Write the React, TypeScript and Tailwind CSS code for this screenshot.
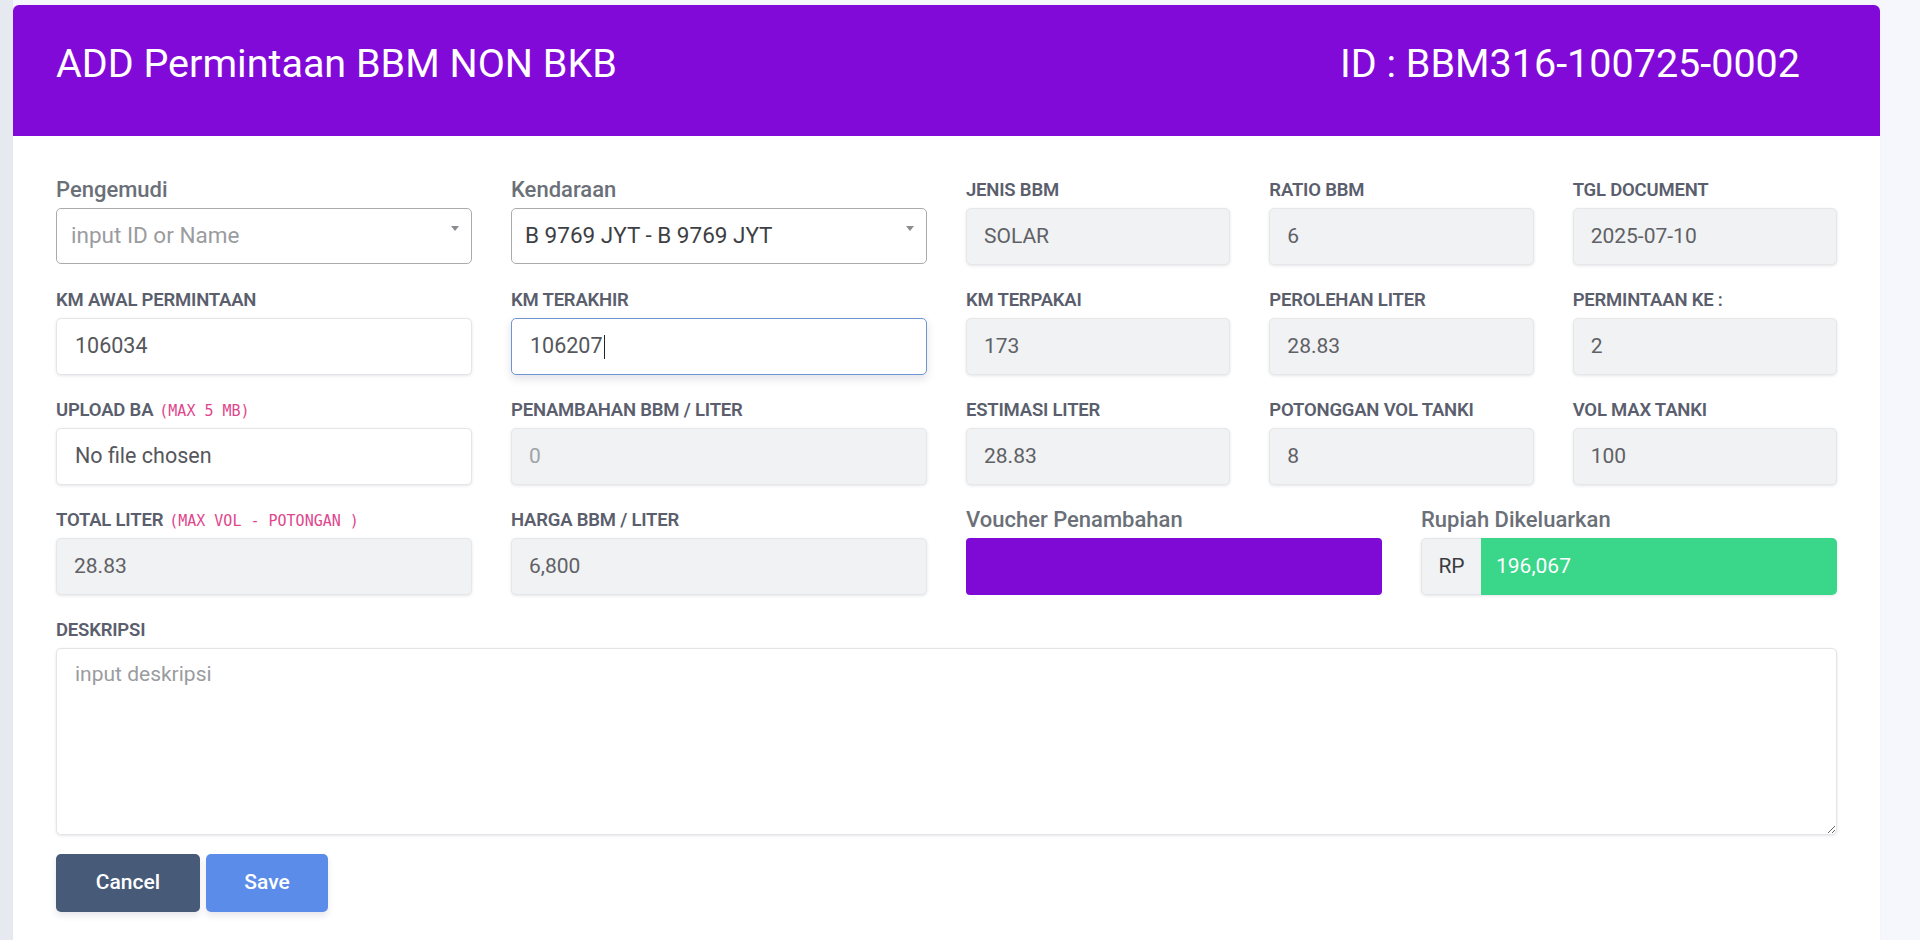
import React from "react";

const font = { fontFamily: "Roboto, 'Liberation Sans', sans-serif" };

function UpperLabel({ children }: { children: React.ReactNode }) {
  return (
    <div className="h-[24px] leading-[24px] mb-[6px] text-[18.5px] font-semibold uppercase text-[#5a5e6d] tracking-[-0.2px] whitespace-nowrap">
      {children}
    </div>
  );
}

function BigLabel({ children }: { children: React.ReactNode }) {
  return (
    <div className="h-[24px] leading-[24px] mb-[6px] text-[22px] font-medium text-[#6b7078] whitespace-nowrap">
      {children}
    </div>
  );
}

function Code({ children }: { children: React.ReactNode }) {
  return (
    <span
      className="text-[15px] font-normal normal-case text-[#e0468c] ml-[6px] tracking-normal"
      style={{ fontFamily: "'DejaVu Sans Mono', 'Liberation Mono', monospace" }}
    >
      {children}
    </span>
  );
}

function Disabled({ value, muted }: { value: string; muted?: boolean }) {
  return (
    <div
      className={`h-[57px] rounded-[5px] bg-[#f1f2f3] border border-[#e6e7e9] shadow-[0_1px_3px_rgba(50,50,93,0.12)] flex items-center px-[17px] text-[21px] ${
        muted ? "text-[#a0a3a8]" : "text-[#5f6166]"
      }`}
    >
      {value}
    </div>
  );
}

function White({ value }: { value: string }) {
  return (
    <div className="h-[57px] rounded-[5px] bg-white border border-[#e3e5e8] shadow-[0_1px_3px_rgba(50,50,93,0.12)] flex items-center px-[18px] text-[21.5px] text-[#55575c]">
      {value}
    </div>
  );
}

function Select({ value, placeholder }: { value?: string; placeholder?: string }) {
  return (
    <div className="relative h-[56px] rounded-[5px] bg-white border border-[#a9abae] flex items-center pl-[13px] text-[22.5px]">
      {value ? (
        <span className="text-[#3d3f44]">{value}</span>
      ) : (
        <span className="text-[#9a9ca0] pl-[1px]">{placeholder}</span>
      )}
      <span className="absolute right-[12px] top-[17px] w-0 h-0 border-l-[4px] border-r-[4px] border-t-[5px] border-l-transparent border-r-transparent border-t-[#8a8c90]" />
    </div>
  );
}

export default function App() {
  return (
    <div className="w-[1920px] h-[940px] overflow-hidden flex bg-[#f5f7fd]" style={font}>
      <div className="w-[13px] h-full bg-[#e6e9f0] shrink-0" />
      <div className="pt-[5px] shrink-0">
        <div className="w-[1867px] h-[935px] bg-white rounded-t-[6px] shadow-[0_0_2px_rgba(0,0,0,0.05)]">
          <div className="h-[131px] bg-[#810ad8] rounded-t-[6px] flex items-start justify-between pl-[43px] pr-[80px] pt-[35px] text-white text-[39.5px] leading-[47px]">
            <div>ADD Permintaan BBM NON BKB</div>
            <div>ID : BBM316-100725-0002</div>
          </div>

          <div className="px-[43px] pt-[42px]">
            <div className="grid grid-cols-12 gap-x-[39px] gap-y-[23px]">
              {/* Row 1 */}
              <div className="col-span-3">
                <BigLabel>Pengemudi</BigLabel>
                <Select placeholder="input ID or Name" />
              </div>
              <div className="col-span-3">
                <BigLabel>Kendaraan</BigLabel>
                <Select value="B 9769 JYT - B 9769 JYT" />
              </div>
              <div className="col-span-2">
                <UpperLabel>JENIS BBM</UpperLabel>
                <Disabled value="SOLAR" />
              </div>
              <div className="col-span-2">
                <UpperLabel>RATIO BBM</UpperLabel>
                <Disabled value="6" />
              </div>
              <div className="col-span-2">
                <UpperLabel>TGL DOCUMENT</UpperLabel>
                <Disabled value="2025-07-10" />
              </div>

              {/* Row 2 */}
              <div className="col-span-3">
                <UpperLabel>KM AWAL PERMINTAAN</UpperLabel>
                <White value="106034" />
              </div>
              <div className="col-span-3">
                <UpperLabel>KM TERAKHIR</UpperLabel>
                <div className="h-[57px] rounded-[5px] bg-white border border-[#6f94d2] shadow-[0_4px_8px_rgba(50,50,93,0.14)] flex items-center px-[18px] text-[21.5px] text-[#55575c]">
                  <span>106207</span>
                  <span className="inline-block w-[1px] h-[24px] bg-[#222] ml-[1px]" />
                </div>
              </div>
              <div className="col-span-2">
                <UpperLabel>KM TERPAKAI</UpperLabel>
                <Disabled value="173" />
              </div>
              <div className="col-span-2">
                <UpperLabel>PEROLEHAN LITER</UpperLabel>
                <Disabled value="28.83" />
              </div>
              <div className="col-span-2">
                <UpperLabel>PERMINTAAN KE :</UpperLabel>
                <Disabled value="2" />
              </div>

              {/* Row 3 */}
              <div className="col-span-3">
                <UpperLabel>
                  UPLOAD BA<Code>(MAX 5 MB)</Code>
                </UpperLabel>
                <White value="No file chosen" />
              </div>
              <div className="col-span-3">
                <UpperLabel>PENAMBAHAN BBM / LITER</UpperLabel>
                <Disabled value="0" muted />
              </div>
              <div className="col-span-2">
                <UpperLabel>ESTIMASI LITER</UpperLabel>
                <Disabled value="28.83" />
              </div>
              <div className="col-span-2">
                <UpperLabel>POTONGGAN VOL TANKI</UpperLabel>
                <Disabled value="8" />
              </div>
              <div className="col-span-2">
                <UpperLabel>VOL MAX TANKI</UpperLabel>
                <Disabled value="100" />
              </div>

              {/* Row 4 */}
              <div className="col-span-3">
                <UpperLabel>
                  TOTAL LITER<Code>(MAX VOL - POTONGAN )</Code>
                </UpperLabel>
                <Disabled value="28.83" />
              </div>
              <div className="col-span-3">
                <UpperLabel>HARGA BBM / LITER</UpperLabel>
                <Disabled value="6,800" />
              </div>
              <div className="col-span-3">
                <BigLabel>Voucher Penambahan</BigLabel>
                <div className="h-[57px] rounded-[4px] bg-[#7f0ad6]" />
              </div>
              <div className="col-span-3">
                <BigLabel>Rupiah Dikeluarkan</BigLabel>
                <div className="h-[57px] flex rounded-[5px] shadow-[0_1px_3px_rgba(50,50,93,0.12)]">
                  <div className="w-[60px] shrink-0 rounded-l-[5px] bg-[#f1f2f4] border border-[#e3e5e8] border-r-0 flex items-center justify-center text-[21px] text-[#3b3d42]">
                    RP
                  </div>
                  <div className="flex-1 rounded-r-[5px] bg-[#3ad68a] flex items-center px-[15px] text-[21px] text-white">
                    196,067
                  </div>
                </div>
              </div>

              {/* Row 5 */}
              <div className="col-span-12">
                <UpperLabel>DESKRIPSI</UpperLabel>
                <textarea
                  className="block w-full h-[187px] rounded-[5px] bg-white border border-[#e3e5e8] shadow-[0_1px_3px_rgba(50,50,93,0.12)] px-[18px] py-[10px] text-[21px] text-[#55575c] placeholder:text-[#9a9ca0] outline-none resize-y"
                  style={font}
                  placeholder="input deskripsi"
                />
              </div>
            </div>

            <div className="flex gap-[6px] mt-[19px]">
              <button className="w-[144px] h-[58px] rounded-[5px] bg-[#475b79] text-white text-[21px] font-medium shadow-[0_4px_6px_rgba(50,50,93,0.11)]">
                Cancel
              </button>
              <button className="w-[122px] h-[58px] rounded-[5px] bg-[#5b8ce9] text-white text-[21px] font-medium shadow-[0_4px_6px_rgba(50,50,93,0.11)]">
                Save
              </button>
            </div>
          </div>
        </div>
      </div>
    </div>
  );
}
